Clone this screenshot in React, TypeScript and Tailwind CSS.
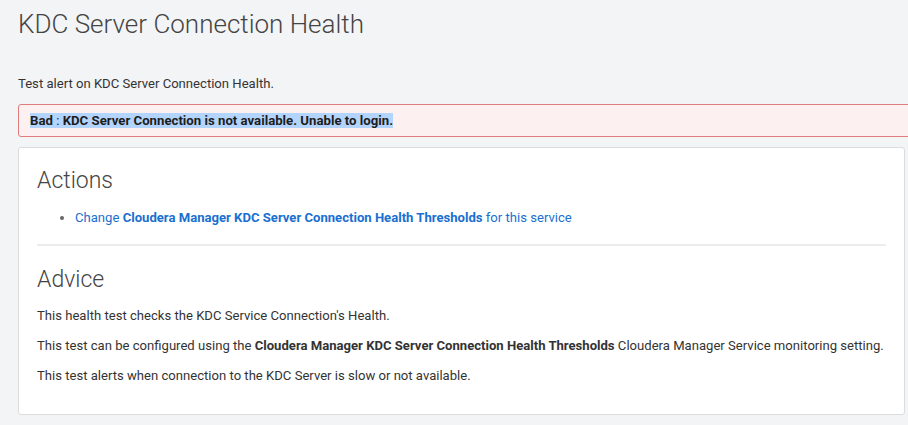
export default function App() {
  return (
    <div className="min-h-[425px] bg-[#f3f4f6] pl-[18px] pr-[3px] pt-[9px] font-['Roboto',sans-serif] text-[#333] overflow-hidden">
      {/* Page title */}
      <h1 className="text-[26px] font-light leading-[30px] text-[#444]">KDC Server Connection Health</h1>

      <p className="mt-[37px] text-[13.1px] leading-[16px] text-[#333]">Test alert on KDC Server Connection Health.</p>

      {/* Health status banner */}
      <div className="mt-[12px] -mr-[20px] h-[33px] flex items-center rounded-[3px] border border-[#e07c7e] bg-[#fdf0f0] px-[11px]">
        <span className="bg-[#b3d4fc] text-[13.2px] leading-[15px] text-[#1d1d1d]">
          <b>Bad</b> : <b>KDC Server Connection is not available. Unable to login.</b>
        </span>
      </div>

      {/* Details card */}
      <div className="mt-[10px] h-[268px] rounded-[3px] border border-[#dcdcdc] bg-white px-[18px] pt-[17px]">
        <h2 className="text-[23px] font-light leading-[32px] text-[#444]">Actions</h2>
        <ul className="mt-[13px] list-disc pl-[38px] text-[13.1px] leading-[16px] marker:text-[#666]">
          <li className="text-[#1a6fd0]">
            Change <b>Cloudera Manager KDC Server Connection Health Thresholds</b> for this service
          </li>
        </ul>
        <hr className="mt-[18px] border-t-[2px] border-[#ececec]" />
        <h2 className="mt-[18px] text-[23px] font-light leading-[32px] text-[#444]">Advice</h2>
        <div className="mt-[12px] flex flex-col gap-[14px] text-[13.1px] leading-[16px] text-[#333]">
          <p>This health test checks the KDC Service Connection's Health.</p>
          <p>
            This test can be configured using the <b>Cloudera Manager KDC Server Connection Health Thresholds</b> Cloudera
            Manager Service monitoring setting.
          </p>
          <p>This test alerts when connection to the KDC Server is slow or not available.</p>
        </div>
      </div>
    </div>
  );
}
